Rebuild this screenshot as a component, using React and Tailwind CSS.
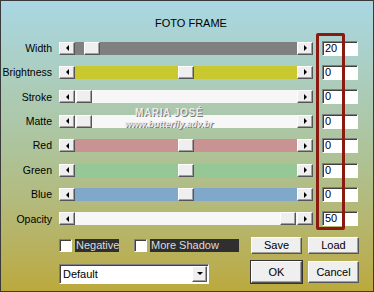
import React from 'react';

const sliders = [
  { label: 'Width', value: '20', track: 'bg-[#808080]', pos: 9 },
  { label: 'Brightness', value: '0', track: 'bg-[#c9c82e]', pos: 103 },
  { label: 'Stroke', value: '0', track: 'bg-[#f7f7f7]', pos: 1 },
  { label: 'Matte', value: '0', track: 'bg-[#f7f7f7]', pos: 1 },
  { label: 'Red', value: '0', track: 'bg-[#c99394]', pos: 103 },
  { label: 'Green', value: '0', track: 'bg-[#95c896]', pos: 103 },
  { label: 'Blue', value: '0', track: 'bg-[#80a8cb]', pos: 103 },
  { label: 'Opacity', value: '50', track: 'bg-[#f7f7f7]', pos: 205 },
];

const raised =
  'bg-[#efefef] border border-t-white border-l-white border-r-[#555] border-b-[#555] shadow-[inset_-1px_-1px_0_#a0a0a0]';
const sunken =
  'bg-white border border-t-[#808080] border-l-[#808080] border-r-white border-b-white shadow-[inset_1px_1px_0_#404040]';

function ArrowButton({ dir }) {
  return (
    <div className={`w-[16px] h-[13px] flex items-center justify-center ${raised}`}>
      {dir === 'left' ? (
        <div className="w-0 h-0 border-y-[3px] border-y-transparent border-r-[3px] border-r-black" />
      ) : (
        <div className="w-0 h-0 border-y-[3px] border-y-transparent border-l-[3px] border-l-black" />
      )}
    </div>
  );
}

function SliderRow({ label, value, track, pos }) {
  return (
    <div className="h-[24.43px] flex items-center">
      <div className="w-[51px] text-right text-[10.5px] text-black leading-none whitespace-nowrap">{label}</div>
      <div className="ml-[7px] flex items-center">
        <ArrowButton dir="left" />
        <div className={`w-[222px] h-[13px] flex ${track}`}>
          <div style={{ width: pos }} />
          <div className={`w-[16px] h-[13px] ${raised}`} />
        </div>
        <div className="w-[17px]">
          <ArrowButton dir="right" />
        </div>
      </div>
      <div className={`ml-[8px] w-[36px] h-[15px] ${sunken} text-[11px] leading-[12px] pl-[2px] text-black`}>
        {value}
      </div>
    </div>
  );
}

function Check({ label, width }) {
  return (
    <div className="flex items-center">
      <div className={`w-[13px] h-[13px] ${sunken}`} />
      <div
        className="ml-[3px] h-[13px] bg-[#2f2f2f] text-[#dcdcdc] text-[11px] leading-[13px] pl-[1px]"
        style={{ width }}
      >
        {label}
      </div>
    </div>
  );
}

function Btn({ children, h, strong }) {
  return (
    <div
      className={`w-[51px] flex items-center justify-center text-[11px] text-black ${raised} ${
        strong ? 'outline outline-1 outline-[#333]' : ''
      }`}
      style={{ height: h }}
    >
      {children}
    </div>
  );
}

export default function App() {
  return (
    <div
      className="relative w-[374px] h-[292px] border border-[#3a3a3a] bg-linear-to-b from-[#a9d7e3] via-[#adc49c] to-[#bba93c] overflow-hidden"
      style={{ fontFamily: '"Liberation Sans", Arial, sans-serif' }}
    >
      <div className="mt-[15px] h-[14px] leading-[14px] text-[11px] text-black text-center pl-[8px]">
        FOTO FRAME
      </div>

      <div className="mt-[5.8px]">
        {sliders.map((s) => (
          <SliderRow key={s.label} {...s} />
        ))}
      </div>

      <div className="mt-[4.8px] h-[19px] flex items-center pl-[58px]">
        <Check label="Negative" width={44} />
        <div className="ml-[15px]">
          <Check label="More Shadow" width={89} />
        </div>
        <div className="ml-[12px] flex gap-[6px]">
          <Btn h={17}>Save</Btn>
          <Btn h={17}>Load</Btn>
        </div>
      </div>

      <div className="mt-[6px] h-[23px] flex items-start pl-[58px]">
        <div className={`mt-[3px] w-[150px] h-[20px] flex items-center ${sunken}`}>
          <div className="flex-1 text-[11px] pl-[3px] text-black">Default</div>
          <div className={`w-[15px] h-[16px] mr-[1px] flex items-center justify-center ${raised}`}>
            <div className="w-0 h-0 border-x-[3px] border-x-transparent border-t-[3px] border-t-black" />
          </div>
        </div>
        <div className="ml-[42px] flex gap-[6px]">
          <Btn h={22} strong>
            OK
          </Btn>
          <Btn h={22}>Cancel</Btn>
        </div>
      </div>

      {/* watermark */}
      <div className="absolute left-[118px] top-[107px] w-[100px] text-center leading-none pointer-events-none">
        <div className="text-[10px] font-bold tracking-[0.6px] text-[#ececec] [text-shadow:1px_1px_0_#7a7a7a]">
          MARIA JOSÉ
        </div>
        <div className="mt-[2px] text-[9px] italic font-bold text-[#e6e6e6] [text-shadow:1px_1px_0_#777]">
          www.butterfly.adv.br
        </div>
      </div>

      {/* highlight box */}
      <div className="absolute left-[315px] top-[32px] w-[29px] h-[197px] border-[3px] border-[#8a1a0f] rounded-[2px] pointer-events-none" />
    </div>
  );
}
